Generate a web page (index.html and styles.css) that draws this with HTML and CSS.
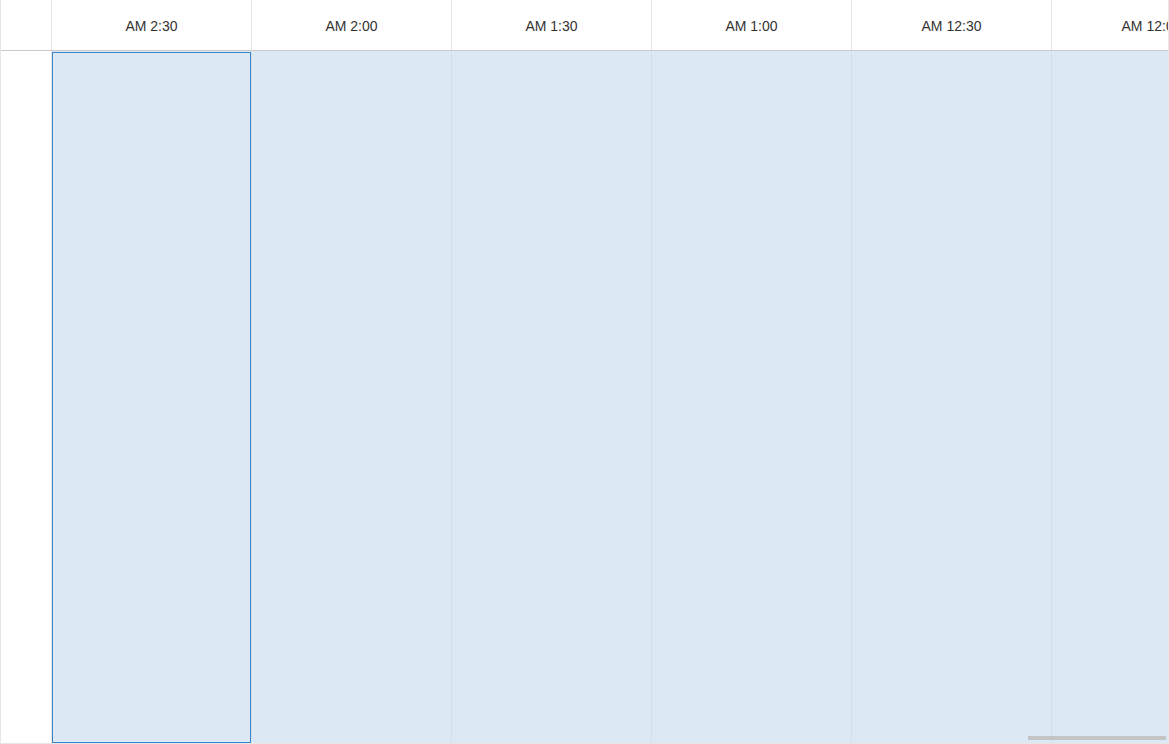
FILE: index.html
```html
<!DOCTYPE html>
<html>
<head>
<meta charset="utf-8">
<link rel="stylesheet" href="styles.css">
</head>
<body>
<div class="scheduler">
  <div class="viewport">
    <div class="header">
      <div class="gutter"></div>
      <div class="hcell">AM 2:30</div>
      <div class="hcell">AM 2:00</div>
      <div class="hcell">AM 1:30</div>
      <div class="hcell">AM 1:00</div>
      <div class="hcell">AM 12:30</div>
      <div class="hcell">AM 12:00</div>
    </div>
    <div class="body">
      <div class="gutter"></div>
      <div class="bcell"><div class="selected"></div></div>
      <div class="bcell"></div>
      <div class="bcell"></div>
      <div class="bcell"></div>
      <div class="bcell"></div>
      <div class="bcell"></div>
    </div>
  </div>
  <div class="scrollbar"></div>
</div>
</body>
</html>
```
FILE: styles.css
```css
* { box-sizing: border-box; }
html, body { margin: 0; padding: 0; background: #fff; }
body {
  font-family: "Liberation Sans", Arial, sans-serif;
  width: 1169px;
  height: 744px;
  overflow: hidden;
}
.scheduler {
  position: relative;
  width: 1169px;
  height: 744px;
  border-left: 1px solid #e6e6e6;
  border-right: 1px solid #e6e6e6;
  border-bottom: 1px solid #e6e6e6;
  overflow: hidden;
}
.viewport {
  display: flex;
  flex-direction: column;
  height: 100%;
}
.header, .body {
  display: flex;
  flex-wrap: nowrap;
}
.header {
  height: 51px;
  flex: 0 0 51px;
  border-bottom: 1px solid #c9c9c9;
}
.body {
  flex: 1 1 auto;
}
.gutter {
  flex: 0 0 51px;
  width: 51px;
  border-right: 1px solid #e6e6e6;
  background: #fff;
}
.hcell {
  flex: 0 0 200px;
  width: 200px;
  border-right: 1px solid #e6e6e6;
  display: flex;
  align-items: center;
  justify-content: center;
  padding-top: 2px;
  font-size: 14px;
  color: #333;
  white-space: nowrap;
  overflow: hidden;
}
.bcell {
  flex: 0 0 200px;
  width: 200px;
  background: #dce8f3;
  border-right: 1px solid #d3dfeb;
  padding-top: 1px;
  display: flex;
}
.selected {
  flex: 1 1 auto;
  border: 1px solid #3a85cc;
}
.scrollbar {
  position: absolute;
  left: 1027px;
  bottom: 3px;
  width: 138px;
  height: 4px;
  background: #c4c4c4;
}
```
